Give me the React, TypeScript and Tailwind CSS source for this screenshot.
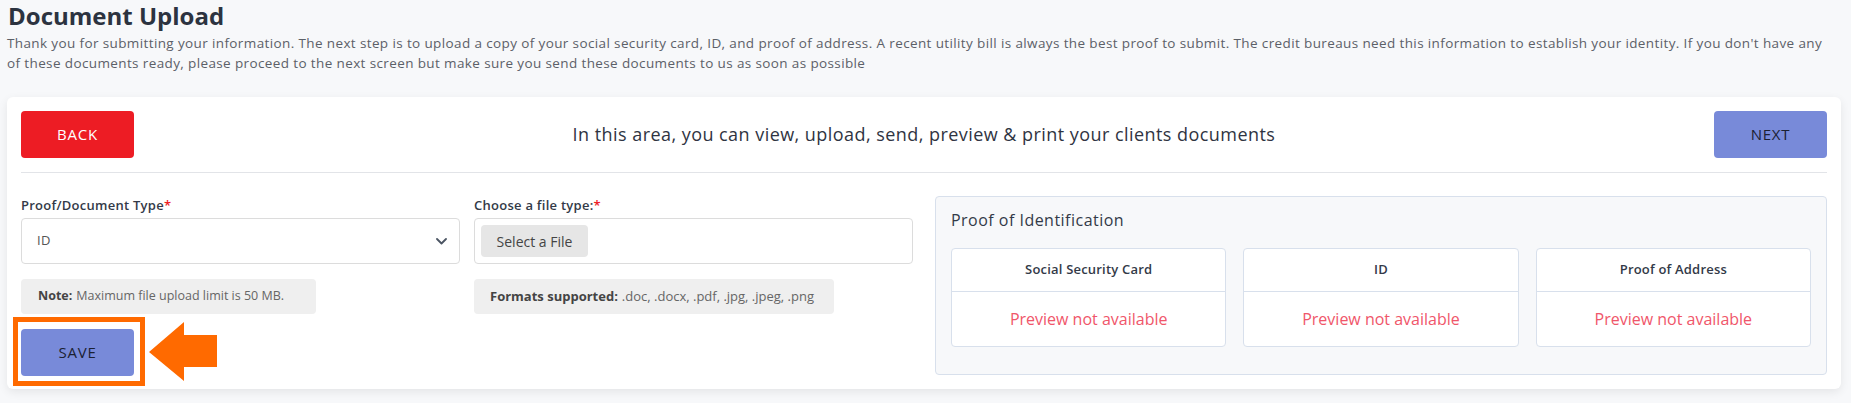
import React from "react";

const font = { fontFamily: '"Open Sans", "Noto Sans", sans-serif' };

const docs = ["Social Security Card", "ID", "Proof of Address"];

const App = () => {
  return (
    <div
      className="min-h-[403px] bg-[#f7f8fa] pl-[7px] pr-[10px] pt-[2px] pb-[14px] text-[#333a48]"
      style={font}
    >
      <h1 className="pl-[1px] text-[24px] font-bold leading-[28px] text-[#2c3340]">Document Upload</h1>
      <p className="mt-[3px] text-[13.5px] leading-[20px] tracking-[0.028em] text-[#5c6068]">
        <span className="block whitespace-nowrap">
          Thank you for submitting your information. The next step is to upload a copy of your social
          security card, ID, and proof of address. A recent utility bill is always the best proof to
          submit. The credit bureaus need this information to establish your identity. If you don't
          have any
        </span>
        <span className="block whitespace-nowrap">
          of these documents ready, please proceed to the next screen but make sure you send these
          documents to us as soon as possible
        </span>
      </p>

      <div className="mt-[24px] rounded-[6px] bg-white px-[14px] pt-[14px] pb-[13px] shadow-[0_3px_10px_rgba(0,0,0,0.08)]">
        {/* top bar */}
        <div className="flex items-center">
          <button className="h-[47px] w-[113px] rounded-[4px] bg-[#ed1c24] text-[15px] font-medium tracking-[0.05em] text-white">
            BACK
          </button>
          <div className="flex-1 text-center text-[18px] font-medium tracking-[0.025em] text-[#2f3442]">
            In this area, you can view, upload, send, preview &amp; print your clients documents
          </div>
          <button className="h-[47px] w-[113px] rounded-[4px] bg-[#788ad9] text-[15px] tracking-[0.05em] text-[#1b2133]">
            NEXT
          </button>
        </div>
        <div className="mt-[14px] h-px bg-[#e2e4e8]" />

        {/* form + previews */}
        <div className="mt-[23px] flex">
          <div className="w-[439px]">
            <label className="block text-[13px] font-semibold leading-[18px] tracking-[0.02em] text-[#333a48]">
              Proof/Document Type<span className="text-[#ed1c24]">*</span>
            </label>
            <div className="mt-[4px] flex h-[46px] items-center justify-between rounded-[4px] border border-[#dcdcdc] pl-[15px] pr-[12px]">
              <span className="text-[13px] tracking-[0.03em] text-[#555]">ID</span>
              <svg width="11" height="7" viewBox="0 0 11 7" fill="none">
                <path d="M1 1l4.5 4.5L10 1" stroke="#4b5563" strokeWidth="1.8" strokeLinecap="round" strokeLinejoin="round" />
              </svg>
            </div>
            <div className="mt-[15px] inline-flex h-[35px] w-[295px] items-center rounded-[4px] bg-[#efefef] pl-[17px] text-[12.5px] text-[#666]">
              <b className="mr-1 font-bold text-[#444]">Note:</b> Maximum file upload limit is 50 MB.
            </div>
            <div className="relative mt-[15px] w-[113px]">
              <button className="h-[47px] w-[113px] rounded-[4px] bg-[#788ad9] text-[15px] tracking-[0.05em] text-[#1b2133]">
                SAVE
              </button>
              <div className="pointer-events-none absolute -left-[8px] -right-[11px] -top-[12px] -bottom-[10px] border-[5px] border-[#ff6a00]" />
              <svg className="absolute left-[128px] -top-[7px]" width="68" height="59" viewBox="0 0 68 59">
                <polygon points="0,30 35,0 35,13 68,13 68,45 35,45 35,59" fill="#ff6a00" />
              </svg>
            </div>
          </div>

          <div className="ml-[14px] w-[439px]">
            <label className="block text-[13px] font-semibold leading-[18px] tracking-[0.02em] text-[#333a48]">
              Choose a file type:<span className="text-[#ed1c24]">*</span>
            </label>
            <div className="mt-[4px] flex h-[46px] items-center rounded-[4px] border border-[#dcdcdc] pl-[6px]">
              <span className="flex h-[32px] w-[107px] items-center justify-center rounded-[4px] bg-[#e6e6e6] text-[14px] text-[#444]">
                Select a File
              </span>
            </div>
            <div className="mt-[15px] inline-flex h-[35px] w-[360px] items-center rounded-[4px] bg-[#efefef] pl-[16px] text-[13px] text-[#666]">
              <b className="mr-1 font-bold text-[#444]">Formats supported:</b> .doc, .docx, .pdf, .jpg, .jpeg, .png
            </div>
          </div>

          <div className="ml-[22px] h-[179px] flex-1 rounded-[4px] border border-[#d8e0ec] bg-[#f7f8fa] px-[15px] pt-[13px]">
            <h3 className="text-[16px] font-medium leading-[20px] tracking-[0.03em] text-[#333a48]">
              Proof of Identification
            </h3>
            <div className="mt-[18px] grid grid-cols-3 gap-[17px]">
              {docs.map((d) => (
                <div key={d} className="rounded-[4px] border border-[#d8e0ec] bg-white">
                  <div className="flex h-[43px] items-center justify-center border-b border-[#d8e0ec] text-[13px] font-semibold tracking-[0.015em] text-[#333a48]">
                    {d}
                  </div>
                  <div className="flex h-[54px] items-center justify-center text-[16px] text-[#f0566a]">
                    Preview not available
                  </div>
                </div>
              ))}
            </div>
          </div>
        </div>
      </div>
    </div>
  );
};

export default App;
